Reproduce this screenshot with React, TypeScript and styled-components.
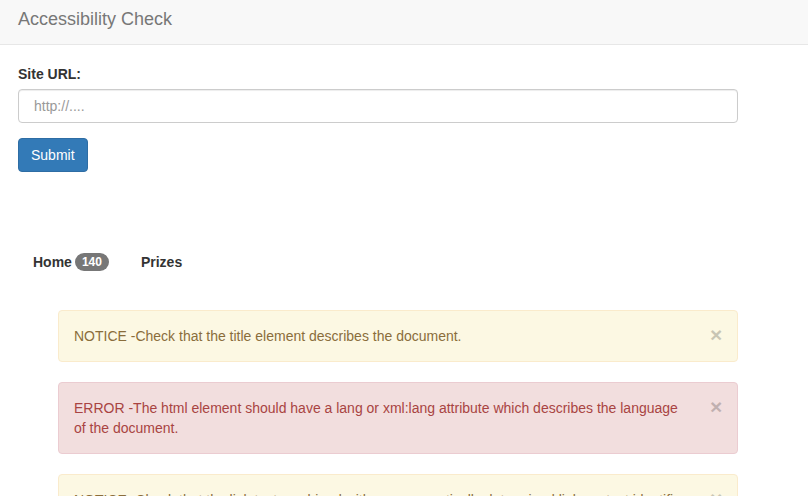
import styled, {createGlobalStyle} from 'styled-components';

const GlobalStyle = createGlobalStyle`
  * {
    box-sizing: border-box;
  }
  body {
    margin: 0;
    font-family: "Liberation Sans", Arial, sans-serif;
    font-size: 14px;
    line-height: 20px;
    color: #333;
    background: #fff;
  }
`;

const Navbar = styled.header`
  height: 45px;
  background: #f8f8f8;
  border-bottom: 1px solid #e7e7e7;
  display: flex;
  align-items: center;
  padding: 0 18px 6px;
`;

const Brand = styled.span`
  font-size: 18px;
  line-height: 20px;
  color: #777;
`;

const Main = styled.main`
  padding: 19px 0 0 18px;
  width: 738px;
`;

const Form = styled.form`
  display: flex;
  flex-direction: column;
  align-items: flex-start;
`;

const Label = styled.label`
  font-weight: bold;
  margin-bottom: 5px;
`;

const Input = styled.input`
  width: 100%;
  height: 34px;
  padding: 6px 15px;
  font-family: inherit;
  font-size: 14px;
  color: #555;
  border: 1px solid #ccc;
  border-radius: 4px;
  box-shadow: inset 0 1px 1px rgba(0, 0, 0, 0.075);
  &::placeholder {
    color: #999;
  }
`;

const Button = styled.button`
  margin-top: 15px;
  height: 34px;
  padding: 6px 12px;
  font-family: inherit;
  font-size: 14px;
  line-height: 20px;
  color: #fff;
  background: #337ab7;
  border: 1px solid #2e6da4;
  border-radius: 4px;
`;

const Pills = styled.ul`
  list-style: none;
  margin: 70px 0 0;
  padding: 0;
  display: flex;
  gap: 2px;
`;

const Pill = styled.li`
  padding: 10px 15px;
  font-weight: bold;
  color: #333;
  display: flex;
  align-items: center;
`;

const Badge = styled.span`
  margin-left: 3px;
  padding: 3px 7px;
  font-size: 12px;
  line-height: 1;
  font-weight: bold;
  color: #fff;
  background: #777;
  border-radius: 10px;
`;

const AlertList = styled.ul`
  list-style: none;
  margin: 28px 0 0;
  padding: 0 0 0 40px;
`;

const Alert = styled.li<{$kind: 'warning' | 'danger'}>`
  display: flex;
  align-items: flex-start;
  margin-bottom: 20px;
  padding: 15px;
  border: 1px solid ${(p) => (p.$kind === 'danger' ? '#ebccd1' : '#faebcc')};
  border-radius: 4px;
  background: ${(p) => (p.$kind === 'danger' ? '#f2dede' : '#fcf8e3')};
  color: ${(p) => (p.$kind === 'danger' ? '#a94442' : '#8a6d3b')};
`;

const Message = styled.span`
  flex: 1;
`;

const Close = styled.button`
  width: 12px;
  margin: -2px 0 0 18px;
  padding: 0;
  border: 0;
  background: none;
  font-family: inherit;
  font-size: 21px;
  font-weight: bold;
  line-height: 1;
  color: #000;
  opacity: 0.2;
`;

const alerts: {kind: 'warning' | 'danger'; text: string}[] = [
  {kind: 'warning', text: 'NOTICE -Check that the title element describes the document.'},
  {
    kind: 'danger',
    text: 'ERROR -The html element should have a lang or xml:lang attribute which describes the language of the document.',
  },
  {
    kind: 'warning',
    text: 'NOTICE -Check that the link text combined with programmatically determined link context identifies the purpose of the link.',
  },
];

export default function App() {
  return (
    <>
      <GlobalStyle />
      <Navbar>
        <Brand>Accessibility Check</Brand>
      </Navbar>
      <Main>
        <Form onSubmit={(e) => e.preventDefault()}>
          <Label htmlFor="url">Site URL:</Label>
          <Input id="url" type="text" placeholder="http://...." />
          <Button type="submit">Submit</Button>
        </Form>
        <Pills>
          <Pill>
            Home <Badge>140</Badge>
          </Pill>
          <Pill>Prizes</Pill>
        </Pills>
        <AlertList>
          {alerts.map((a, i) => (
            <Alert key={i} $kind={a.kind}>
              <Message>{a.text}</Message>
              <Close aria-label="Close">×</Close>
            </Alert>
          ))}
        </AlertList>
      </Main>
    </>
  );
}
